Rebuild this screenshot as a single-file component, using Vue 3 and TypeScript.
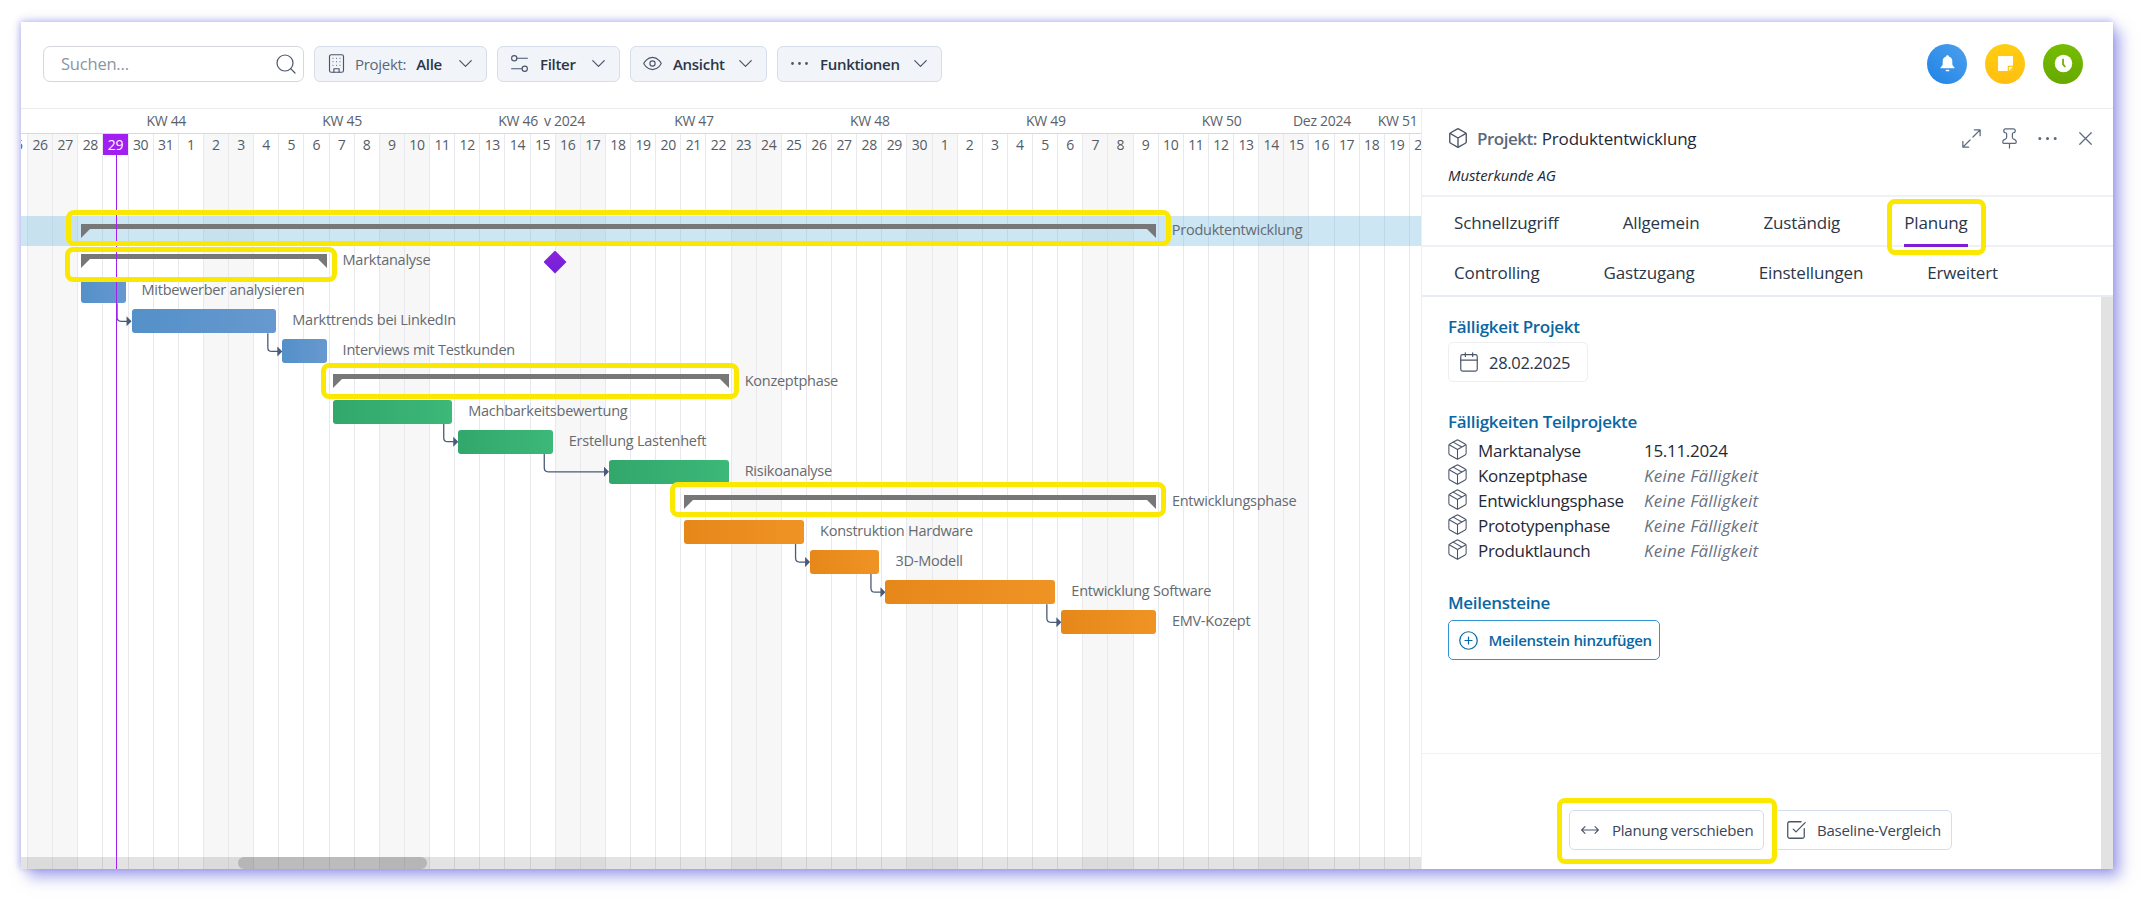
<script setup lang="ts">
interface IDay {
  label: number;
  weekend: boolean;
  today: boolean;
}

interface IRow {
  name: string;
  start: number;
  days: number;
  kind: 'summary' | 'blue' | 'green' | 'orange';
  linked?: boolean;
}

const DAY = 25.13;
const ROW = 30.1;
const ROWS_TOP = 107;
const ORIGIN = -18.1;

// 25 Oct 2024 is the first column, a Friday
const days: IDay[] = [];
for (let i = 0; i < 57; i++) {
  const d = new Date(2024, 9, 25 + i);
  days.push({
    label: d.getDate(),
    weekend: d.getDay() === 0 || d.getDay() === 6,
    today: i === 4,
  });
}

const weeks = [44, 45, 46, 47, 48, 49, 50, 51];

const rows: IRow[] = [
  { name: 'Produktentwicklung', start: 3, days: 43, kind: 'summary' },
  { name: 'Marktanalyse', start: 3, days: 10, kind: 'summary' },
  { name: 'Mitbewerber analysieren', start: 3, days: 2, kind: 'blue' },
  { name: 'Markttrends bei LinkedIn', start: 5, days: 6, kind: 'blue', linked: true },
  { name: 'Interviews mit Testkunden', start: 11, days: 2, kind: 'blue', linked: true },
  { name: 'Konzeptphase', start: 13, days: 16, kind: 'summary' },
  { name: 'Machbarkeitsbewertung', start: 13, days: 5, kind: 'green' },
  { name: 'Erstellung Lastenheft', start: 18, days: 4, kind: 'green', linked: true },
  { name: 'Risikoanalyse', start: 24, days: 5, kind: 'green', linked: true },
  { name: 'Entwicklungsphase', start: 27, days: 19, kind: 'summary' },
  { name: 'Konstruktion Hardware', start: 27, days: 5, kind: 'orange' },
  { name: '3D-Modell', start: 32, days: 3, kind: 'orange', linked: true },
  { name: 'Entwicklung Software', start: 35, days: 7, kind: 'orange', linked: true },
  { name: 'EMV-Kozept', start: 42, days: 4, kind: 'orange', linked: true },
];

const barLeft = (r: IRow) => r.start * DAY + ORIGIN + 3;
const barWidth = (r: IRow) => r.days * DAY - 6;

const rowStyle = (r: IRow) => ({ paddingLeft: `${barLeft(r)}px` });
const barStyle = (r: IRow) => ({ width: `${barWidth(r)}px` });

const links = rows.flatMap((r, i) => {
  if (!r.linked) return [];
  const prev = rows[i - 1];
  const x = barLeft(prev) + barWidth(prev) - 8.5;
  const top = ROWS_TOP + (i - 1) * ROW + 27;
  const y = ROWS_TOP + i * ROW + 15;
  const end = barLeft(r);
  return [{
    line: `M${x} ${top}V${y - 4}q0 4 4 4H${end - 4}`,
    head: `${end - 5},${y - 5} ${end},${y} ${end - 5},${y + 5}`,
  }];
});

// annotation frames around the summary bars, in gantt pixels
const marks = [
  { left: 44.5, top: 101, width: 1105, height: 36 },
  { left: 44, top: 138, width: 272, height: 34.5 },
  { left: 300, top: 254, width: 418, height: 36 },
  { left: 649, top: 373, width: 496, height: 35 },
];

const markStyle = (m: { left: number; top: number; width: number; height: number }) => ({
  left: `${m.left}px`,
  top: `${m.top}px`,
  width: `${m.width}px`,
  height: `${m.height}px`,
});

const tabsTop = ['Schnellzugriff', 'Allgemein', 'Zuständig', 'Planung'];
const tabsBottom = ['Controlling', 'Gastzugang', 'Einstellungen', 'Erweitert'];

const subprojects = [
  { name: 'Marktanalyse', due: '15.11.2024' },
  { name: 'Konzeptphase', due: '' },
  { name: 'Entwicklungsphase', due: '' },
  { name: 'Prototypenphase', due: '' },
  { name: 'Produktlaunch', due: '' },
];
</script>

<template>
  <div class="stage">
    <div class="window">
      <header class="toolbar">
        <div class="search">
          <span class="search-text">Suchen...</span>
          <svg class="ico search-ico" viewBox="0 0 24 24"><circle cx="11" cy="11" r="8" /><path d="m21 21-4.3-4.3" /></svg>
        </div>
        <button class="tool tool-project">
          <svg class="ico" viewBox="0 0 24 24">
            <rect x="4" y="2" width="16" height="20" rx="2" />
            <path d="M9 22v-4h6v4M8 6h.01M12 6h.01M16 6h.01M8 10h.01M12 10h.01M16 10h.01M8 14h.01M12 14h.01M16 14h.01" />
          </svg>
          <span class="tool-muted">Projekt:</span>
          <span class="tool-text">Alle</span>
          <svg class="ico chevron" viewBox="0 0 24 24"><path d="m6 9 6 6 6-6" /></svg>
        </button>
        <button class="tool tool-filter">
          <svg class="ico" viewBox="0 0 24 24">
            <circle cx="6" cy="6" r="3" /><path d="M9 6h12M3 18h12" /><circle cx="18" cy="18" r="3" />
          </svg>
          <span class="tool-text">Filter</span>
          <svg class="ico chevron" viewBox="0 0 24 24"><path d="m6 9 6 6 6-6" /></svg>
        </button>
        <button class="tool tool-view">
          <svg class="ico" viewBox="0 0 24 24">
            <path d="M2 12s3.5-7 10-7 10 7 10 7-3.5 7-10 7-10-7-10-7Z" /><circle cx="12" cy="12" r="3" />
          </svg>
          <span class="tool-text">Ansicht</span>
          <svg class="ico chevron" viewBox="0 0 24 24"><path d="m6 9 6 6 6-6" /></svg>
        </button>
        <button class="tool tool-func">
          <svg class="ico" viewBox="0 0 24 24">
            <path d="M4 12h.01M12 12h.01M20 12h.01" class="dots" />
          </svg>
          <span class="tool-text">Funktionen</span>
          <svg class="ico chevron" viewBox="0 0 24 24"><path d="m6 9 6 6 6-6" /></svg>
        </button>

        <div class="round-btns">
          <span class="round round-blue">
            <svg viewBox="0 0 24 24"><path d="M12 2.500c.9 0 1.500.6 1.600 1.400 2.500.7 3.900 2.800 3.900 5.400v3.400c0 1.300.8 2.300 2.500 3.800v1H4v-1c1.700-1.500 2.500-2.500 2.500-3.800V9.300c0-2.600 1.400-4.700 3.900-5.400.1-.8.7-1.400 1.600-1.400ZM10 19h4v1.800h-4Z" fill="#fff" /></svg>
          </span>
          <span class="round round-yellow">
            <svg viewBox="0 0 24 24"><path d="M3.500 3.500h17v17h-17Z" fill="#fff" /><path d="M14.500 14.500h6v6h-6Z" fill="#ffca12" /><path d="M16 16h4l-4 4Z" fill="#fff" /></svg>
          </span>
          <span class="round round-green">
            <svg viewBox="0 0 24 24"><circle cx="12" cy="12" r="10" fill="#fff" /><path d="M11.500 6.500v6.500l2.500 3" stroke="#6fb200" stroke-width="2" fill="none" /></svg>
          </span>
        </div>
      </header>

      <div class="main">
        <section class="gantt">
          <div class="weeks">
            <span v-for="w in weeks" :key="w" class="week">KW {{ w }}</span>
            <span class="month month-nov">v 2024</span>
            <span class="month month-dec">Dez 2024</span>
          </div>

          <div class="columns">
            <div
              v-for="(d, i) in days"
              :key="i"
              class="col"
              :class="{ weekend: d.weekend }"
            >
              <span class="day" :class="{ today: d.today }">{{ d.label }}</span>
              <span v-if="d.today" class="today-line"></span>
            </div>
          </div>

          <div class="rows">
            <div
              v-for="(r, i) in rows"
              :key="i"
              class="row"
              :class="{ selected: i === 0 }"
              :style="rowStyle(r)"
            >
              <div class="bar" :class="r.kind" :style="barStyle(r)"></div>
              <span class="bar-label">{{ r.name }}</span>
            </div>
          </div>

          <svg class="links">
            <g v-for="(l, i) in links" :key="i">
              <path :d="l.line" fill="none" stroke="#4a5a78" stroke-width="1.300" />
              <polygon :points="l.head" fill="#4a5a78" />
            </g>
          </svg>

          <span class="milestone"></span>
          <span v-for="(m, i) in marks" :key="i" class="mark" :style="markStyle(m)"></span>

          <div class="hscroll"><div class="hthumb"></div></div>
        </section>

        <aside class="panel">
          <div class="panel-head">
            <div class="panel-title">
              <svg class="ico cube" viewBox="0 0 24 24">
                <path d="M21 8a2 2 0 0 0-1-1.730l-7-4a2 2 0 0 0-2 0l-7 4A2 2 0 0 0 3 8v8a2 2 0 0 0 1 1.730l7 4a2 2 0 0 0 2 0l7-4A2 2 0 0 0 21 16Z" />
                <path d="m3.300 7 8.700 5 8.700-5M12 22V12" />
              </svg>
              <span class="title-key">Projekt:</span>
              <span class="title-name">Produktentwicklung</span>
              <div class="head-actions">
                <svg class="ico" viewBox="0 0 24 24"><path d="M15 3h6v6M21 3l-7.500 7.500M3 15v6h6M3 21l7.500-7.500" /></svg>
                <svg class="ico" viewBox="0 0 24 24"><path d="M12 17v5M9 10.760a2 2 0 0 1-1.110 1.790l-1.780.9A2 2 0 0 0 5 15.240V16a1 1 0 0 0 1 1h12a1 1 0 0 0 1-1v-.76a2 2 0 0 0-1.110-1.790l-1.780-.9A2 2 0 0 1 15 10.760V7a1 1 0 0 1 1-1 2 2 0 0 0 0-4H8a2 2 0 0 0 0 4 1 1 0 0 1 1 1Z" /></svg>
                <svg class="ico" viewBox="0 0 24 24"><path d="M4 12h.01M12 12h.01M20 12h.01" class="dots" /></svg>
                <svg class="ico" viewBox="0 0 24 24"><path d="M18 6 6 18M6 6l12 12" /></svg>
              </div>
            </div>
            <div class="customer">Musterkunde AG</div>
          </div>

          <nav class="tabs">
            <span v-for="t in tabsTop" :key="t" class="tab" :class="{ active: t === 'Planung' }">
              {{ t }}
              <span v-if="t === 'Planung'" class="mark mark-tab"></span>
            </span>
          </nav>
          <nav class="tabs tabs-second">
            <span v-for="t in tabsBottom" :key="t" class="tab">{{ t }}</span>
          </nav>

          <div class="panel-body">
            <div class="panel-content">
              <h3 class="section-title">Fälligkeit Projekt</h3>
              <div class="date-box">
                <svg class="ico" viewBox="0 0 24 24">
                  <path d="M8 2v4M16 2v4" /><rect x="3" y="4" width="18" height="18" rx="2" /><path d="M3 10h18" />
                </svg>
                <span>28.02.2025</span>
              </div>

              <h3 class="section-title second">Fälligkeiten Teilprojekte</h3>
              <ul class="subprojects">
                <li v-for="s in subprojects" :key="s.name">
                  <svg class="ico" viewBox="0 0 24 24">
                    <path d="M21 8a2 2 0 0 0-1-1.730l-7-4a2 2 0 0 0-2 0l-7 4A2 2 0 0 0 3 8v8a2 2 0 0 0 1 1.730l7 4a2 2 0 0 0 2 0l7-4A2 2 0 0 0 21 16Z" />
                    <path d="m3.300 7 8.700 5 8.700-5M12 22V12M7.500 4.270l9 5.150" />
                  </svg>
                  <span class="sub-name">{{ s.name }}</span>
                  <span v-if="s.due" class="sub-due">{{ s.due }}</span>
                  <span v-else class="sub-none">Keine Fälligkeit</span>
                </li>
              </ul>

              <h3 class="section-title third">Meilensteine</h3>
              <button class="add-btn">
                <svg class="ico" viewBox="0 0 24 24"><circle cx="12" cy="12" r="10" /><path d="M8 12h8M12 8v8" /></svg>
                Meilenstein hinzufügen
              </button>
            </div>
            <div class="panel-footer">
              <button class="foot-btn foot-move">
                <svg class="ico" viewBox="0 0 24 24"><path d="m18 8 4 4-4 4M2 12h20M6 8l-4 4 4 4" /></svg>
                Planung verschieben
                <span class="mark mark-btn"></span>
              </button>
              <button class="foot-btn foot-base">
                <svg class="ico" viewBox="0 0 24 24"><path d="M21 10.500V19a2 2 0 0 1-2 2H5a2 2 0 0 1-2-2V5a2 2 0 0 1 2-2h12.500" /><path d="m9 11 3 3L22 4" /></svg>
                Baseline-Vergleich
              </button>
            </div>
          </div>
        </aside>
      </div>
    </div>
  </div>
</template>

<style scoped>
.stage {
  box-sizing: border-box;
  width: 2148px;
  height: 904px;
  padding: 22px 35px 35px 21px;
  font-family: "Open Sans", "Noto Sans", sans-serif;
  color: #2b3648;
}

.window {
  height: 100%;
  display: flex;
  flex-direction: column;
  background: #fff;
  box-shadow: 7px 8px 14px rgba(96, 96, 220, 0.55), 0 -2px 8px rgba(96, 96, 220, 0.25), -2px 0 6px rgba(96, 96, 220, 0.2);
}

.ico {
  width: 18px;
  height: 18px;
  flex: none;
  fill: none;
  stroke: #4a5568;
  stroke-width: 1.5;
  stroke-linecap: round;
  stroke-linejoin: round;
}
.dots { stroke-width: 3.2; }

/* toolbar */
.toolbar {
  height: 87px;
  flex: none;
  display: flex;
  align-items: center;
  gap: 10px;
  padding: 0 30px 3px 22px;
  box-sizing: border-box;
  border-bottom: 1px solid #e9ebee;
}

.search {
  width: 261px;
  height: 36px;
  box-sizing: border-box;
  border: 1px solid #d4d8de;
  border-radius: 7px;
  display: flex;
  align-items: center;
  justify-content: space-between;
  padding: 0 5px 0 17px;
}
.search-text { font-size: 16.5px; color: #8b95a3; letter-spacing: -0.2px; }
.search-ico { width: 24px; height: 24px; stroke-width: 1.2; }

.tool {
  height: 36px;
  box-sizing: border-box;
  display: flex;
  align-items: center;
  padding: 0 9px 0 11px;
  background: #f1f5f9;
  border: 1px solid #d6deea;
  border-radius: 6px;
  font-family: inherit;
  font-size: 15px;
  color: #2b3648;
}
.tool .ico { width: 21px; height: 21px; stroke-width: 1.3; }
.tool-project { width: 173px; }
.tool-filter { width: 123px; }
.tool-view { width: 137px; }
.tool-func { width: 165px; }
.tool-muted { margin-left: 8px; color: #5b6778; letter-spacing: -0.3px; }
.tool-text { margin-left: 10px; font-weight: 600; letter-spacing: -0.3px; }
.tool .chevron { margin-left: auto; width: 23px; height: 23px; }

.round-btns {
  margin-left: auto;
  display: flex;
  gap: 18px;
}
.round {
  width: 40px;
  height: 40px;
  border-radius: 50%;
  display: flex;
  align-items: center;
  justify-content: center;
}
.round svg { width: 21px; height: 21px; }
.round-blue { background: linear-gradient(45deg, #1f83e6, #4ea0ec); }
.round-yellow { background: linear-gradient(0deg, #ffbe12, #ffce10); }
.round-green { background: linear-gradient(0deg, #68a800, #76bd00); }

/* gantt */
.main {
  flex: 1;
  display: flex;
  min-height: 0;
}

.gantt {
  width: 1401px;
  flex: none;
  position: relative;
  overflow: hidden;
  border-right: 1px solid #eceef1;
  box-sizing: border-box;
}

.weeks {
  height: 25px;
  box-sizing: border-box;
  display: flex;
  padding-left: 57.29px;
  border-bottom: 1px solid #d9d9d9;
  position: relative;
  white-space: nowrap;
}
.week {
  width: 175.91px;
  flex: none;
  text-align: center;
  font-size: 14px;
  line-height: 24px;
  color: #5b616b;
  letter-spacing: -0.3px;
}
.month {
  position: absolute;
  top: 0;
  font-size: 14px;
  line-height: 24px;
  color: #5b616b;
  letter-spacing: -0.3px;
}
.month-nov { left: 523px; }
.month-dec { left: 1272px; }

.columns {
  position: absolute;
  top: 25px;
  bottom: 0;
  left: -18.1px;
  display: flex;
}
.col {
  width: 25.13px;
  flex: none;
  box-sizing: border-box;
  border-right: 1px solid #e9e9ed;
  position: relative;
  text-align: center;
}
.col.weekend { background: #f7f7f7; }
.day {
  display: block;
  height: 21px;
  line-height: 21px;
  font-size: 14px;
  color: #555b66;
  letter-spacing: -0.3px;
}
.day.today {
  background: #a11ff0;
  color: #fff;
}
.today-line {
  position: absolute;
  top: 21px;
  bottom: 0;
  left: 12.5px;
  width: 1px;
  background: #a11ff0;
  z-index: 3;
}

.rows {
  position: relative;
  margin-top: 82px;
  white-space: nowrap;
}
.row {
  height: 30.1px;
  display: flex;
  align-items: center;
  box-sizing: border-box;
}
.row.selected { background: rgba(120, 190, 225, 0.38); }
.bar {
  height: 24px;
  flex: none;
  border-radius: 3px;
  position: relative;
  z-index: 1;
}
.bar.blue { background: linear-gradient(90deg, #5490c9, #6799cf); }
.bar.green { background: linear-gradient(90deg, #32a76c, #3cb878); }
.bar.orange { background: linear-gradient(90deg, #e6871a, #ef9424); }
.bar.summary {
  height: 5px;
  align-self: flex-start;
  margin-top: 8px;
  background: #777;
  border-radius: 0;
}
.bar.summary::before,
.bar.summary::after {
  content: "";
  position: absolute;
  top: 5px;
  width: 0;
  height: 0;
  border-top: 9px solid #777;
}
.bar.summary::before {
  left: 0;
  border-right: 9px solid transparent;
}
.bar.summary::after {
  right: 0;
  border-left: 9px solid transparent;
}
.bar-label {
  margin-left: 16px;
  font-size: 14.5px;
  color: #666a70;
  line-height: 26px;
  margin-bottom: 2px;
  letter-spacing: -0.25px;
}

.links {
  position: absolute;
  inset: 0;
  width: 100%;
  height: 100%;
  pointer-events: none;
}

.milestone {
  position: absolute;
  left: 522.5px;
  top: 141.5px;
  width: 23px;
  height: 23px;
  background: linear-gradient(180deg, #8a22dc, #6f20d8);
  clip-path: polygon(50% 0, 100% 50%, 50% 100%, 0 50%);
}

.mark {
  position: absolute;
  box-sizing: border-box;
  border: 5.5px solid #fbe800;
  border-radius: 8px;
  z-index: 5;
  pointer-events: none;
}

.hscroll {
  position: absolute;
  left: 0;
  right: 0;
  bottom: 0;
  height: 12px;
  background: rgba(0, 0, 0, 0.11);
}
.hthumb {
  width: 189px;
  height: 12px;
  margin-left: 216.5px;
  border-radius: 6px;
  background: rgba(0, 0, 0, 0.17);
}

/* detail panel */
.panel {
  flex: 1;
  min-width: 0;
  display: flex;
  flex-direction: column;
  background: #fff;
}

.panel-head {
  height: 88px;
  flex: none;
  box-sizing: border-box;
  padding: 17px 16px 0 26px;
  border-bottom: 2px solid #eef2f7;
}
.panel-title {
  display: flex;
  align-items: center;
  height: 24px;
  font-size: 17px;
  letter-spacing: -0.2px;
}
.cube { width: 22px; height: 22px; margin-left: -1.5px; }
.title-key { margin-left: 8.5px; color: #5a6a80; font-weight: 600; letter-spacing: -0.5px; }
.title-name { margin-left: 5px; color: #1f2937; }
.head-actions {
  margin-left: auto;
  display: flex;
  align-items: center;
  gap: 15px;
}
.head-actions .ico { width: 23px; height: 23px; stroke: #5a6a80; stroke-width: 1.3; }
.customer {
  margin-top: 15px;
  font-size: 15px;
  font-style: italic;
  color: #1f2937;
  letter-spacing: -0.1px;
}

.tabs {
  height: 50px;
  flex: none;
  box-sizing: border-box;
  display: flex;
  gap: 64px;
  padding-left: 32px;
  border-bottom: 2px solid #eef2f7;
}
.tabs-second { border-bottom-color: #e7ebf6; }
.tab {
  position: relative;
  height: 48px;
  line-height: 51px;
  font-size: 17px;
  letter-spacing: -0.15px;
  color: #2b3648;
}
.tab.active::after {
  content: "";
  position: absolute;
  left: 0;
  right: 0;
  bottom: -2px;
  height: 3px;
  background: #7e1fd6;
}
.mark-tab {
  top: 2px;
  bottom: -10px;
  left: -17px;
  right: -18px;
}

.panel-body {
  flex: 1;
  min-height: 0;
  display: flex;
  flex-direction: column;
  border-right: 12px solid #e2e2e2;
}
.panel-content {
  flex: 1;
  padding: 20px 26px 0;
}

.section-title {
  margin: 0;
  font-size: 17px;
  line-height: 20px;
  font-weight: 600;
  color: #0a67a3;
  letter-spacing: -0.3px;
}
.section-title.second { margin-top: 30px; }
.section-title.third { margin-top: 30px; }

.date-box {
  width: 140px;
  height: 40px;
  margin-top: 5px;
  box-sizing: border-box;
  border: 1px solid #eceef1;
  border-radius: 5px;
  display: flex;
  align-items: center;
  gap: 9px;
  padding-left: 9px;
  font-size: 16.5px;
  letter-spacing: -0.3px;
}
.date-box .ico { width: 22px; height: 22px; stroke-width: 1.3; }

.subprojects {
  list-style: none;
  margin: 6px 0 0;
  padding: 0;
}
.subprojects li {
  height: 25.1px;
  display: flex;
  align-items: center;
  font-size: 17px;
  letter-spacing: -0.3px;
}
.subprojects .ico { width: 23px; height: 23px; margin-left: -2px; margin-top: -3px; stroke-width: 1.1; }
.sub-name { margin-left: 9px; width: 166px; color: #1f2937; }
.sub-due { color: #1f2937; }
.sub-none { font-style: italic; color: #6b7280; letter-spacing: 0.2px; }

.add-btn {
  width: 212px;
  height: 40px;
  margin-top: 7px;
  box-sizing: border-box;
  display: flex;
  align-items: center;
  gap: 9.5px;
  padding: 0 0 0 9px;
  background: #fff;
  border: 1.5px solid #3294d2;
  border-radius: 5px;
  font-family: inherit;
  font-size: 15px;
  font-weight: 600;
  letter-spacing: -0.3px;
  color: #0a67a3;
  white-space: nowrap;
}
.add-btn .ico { width: 21px; height: 21px; stroke: #0a67a3; stroke-width: 1.4; }

.panel-footer {
  height: 116px;
  flex: none;
  box-sizing: border-box;
  border-top: 1px solid #eef1f7;
  display: flex;
  justify-content: flex-end;
  gap: 10px;
  padding: 56px 149px 0 0;
}
.foot-btn {
  position: relative;
  height: 40px;
  box-sizing: border-box;
  display: flex;
  align-items: center;
  padding: 0 10px;
  background: #fff;
  border: 1px solid #d6deea;
  border-radius: 5px;
  font-family: inherit;
  font-size: 15px;
  font-weight: 500;
  letter-spacing: -0.2px;
  color: #3a4556;
  white-space: nowrap;
}
.foot-move .ico { width: 20px; height: 20px; margin-right: 11.5px; stroke-width: 1.3; }
.foot-base .ico { width: 22px; height: 22px; margin-right: 9.5px; stroke-width: 1.4; }
.mark-btn {
  top: -13px;
  bottom: -15px;
  left: -13px;
  right: -14px;
}
</style>

<style>
html, body { margin: 0; background: #fff; }
</style>
